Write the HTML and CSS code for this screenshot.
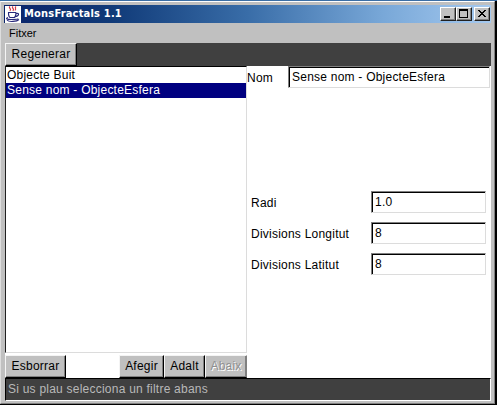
FILE: index.html
```html
<!DOCTYPE html>
<html lang="ca">
<head>
<meta charset="utf-8">
<title>MonsFractals 1.1</title>
<link rel="stylesheet" href="styles.css">
</head>
<body>
<div class="window">
  <header class="titlebar">
    <svg class="logo" width="16" height="17" viewBox="0 0 16 17" fill="none">
      <path fill="#fff" d="M0 0h16v17H0z"/>
      <path stroke="#d33c48" stroke-width="1.2" d="M5 .5C3 2.500 7 2 5 5M8 .5C6 2.500 10 2 8 5M11 .5C9 2.500 12 2 10 4.500"/>
      <path stroke="#29297b" stroke-width="1.2" d="M3 6.500h8M3.500 6.500C3.500 9 4 11 5 11.500h4.500C11 10.500 11 9 11 6.500M11 7.500c4-1 3 3-1 3M3 11.500c-3 1-1 2 3 2s7-.5 7-1M2 14c2 2.500 10 1.500 12-.5"/>
    </svg>
    <h1>MonsFractals 1.1</h1>
    <div class="controls">
      <button class="control" aria-label="Minimitza"><svg width="12" height="10" viewBox="0 0 12 10" shape-rendering="crispEdges"><path d="M2 7h6v2H2z"/></svg></button>
      <button class="control" aria-label="Maximitza"><svg width="12" height="10" viewBox="0 0 12 10" shape-rendering="crispEdges"><path d="M1 0h9v9H1zM2 2v6h7V2z" fill-rule="evenodd"/></svg></button>
      <button class="control close" aria-label="Tanca"><svg width="12" height="10" viewBox="0 0 12 10" shape-rendering="crispEdges"><path d="M2 1h2v1h1v1h2V2h1V1h2v1H9v1H8v1H7v1h1v1h1v1h1v1H8V7H7V6H5v1H4v1H2V7h1V6h1V5h1V4H4V3H3V2H2z"/></svg></button>
    </div>
  </header>
  <nav class="menubar"><span>Fitxer</span></nav>
  <div class="toolbar"><button class="button regenerate">Regenerar</button></div>
  <main class="content">
    <section class="objects">
      <ul class="list">
        <li>Objecte Buit</li>
        <li class="selected">Sense nom - ObjecteEsfera</li>
      </ul>
      <div class="actions">
        <button class="button delete">Esborrar</button>
        <button class="button add">Afegir</button>
        <button class="button up">Adalt</button>
        <button class="button down" disabled>Abaix</button>
      </div>
    </section>
    <section class="details">
      <div class="name-row"><span>Nom</span><div class="field">Sense nom - ObjecteEsfera</div></div>
      <div class="properties">
        <div class="property"><span>Radi</span><div class="field">1.0</div></div>
        <div class="property"><span>Divisions Longitut</span><div class="field">8</div></div>
        <div class="property"><span>Divisions Latitut</span><div class="field">8</div></div>
      </div>
    </section>
  </main>
  <footer class="status">Si us plau selecciona un filtre abans</footer>
</div>
</body>
</html>
```
FILE: styles.css
```css
* { box-sizing: border-box; }
body {
  margin: 0;
  height: 405px;
  overflow: hidden;
  background: #000;
  border-top: 1px solid #3a6ea5;
  font: 12px/15px "Liberation Sans", Arial, sans-serif;
  letter-spacing: .23px;
  color: #000;
}
.window {
  width: 495px;
  height: 403px;
  padding: 3px 2px 2px 3px;
  background: #c0c0c0;
  border: 1px solid #fff;
  border-left-color: #dedede;
  border-right-color: #808080;
  border-bottom-color: #808080;
  display: flex;
  flex-direction: column;
}
.titlebar {
  height: 18px;
  flex: none;
  margin-right: 1px;
  padding: 0 1px;
  display: flex;
  align-items: center;
  background: linear-gradient(90deg, #0a246a 0%, #103a78 22%, #396da8 50%, #79a8d8 78%, #a6caf0 100%);
}
.logo { flex: none; }
h1 {
  margin: 0 auto 0 3px;
  font: bold 11px/18px "DejaVu Sans Condensed", "DejaVu Sans", sans-serif;
  font-stretch: condensed;
  letter-spacing: .2px;
  color: #fff;
}
.controls { display: flex; }
.control {
  width: 16px;
  height: 14px;
  padding: 1px;
  border: 1px solid;
  border-color: #fff #202020 #202020 #fff;
  background: #c0c0c0;
  box-shadow: inset -1px -1px #808080;
  display: block;
}
.control svg { display: block; }
.close { margin-left: 2px; }
.menubar { height: 20px; flex: none; padding: 3px 5px; font-size: 11px; letter-spacing: 0; }
.toolbar { height: 23px; flex: none; margin: 0 1px; background: #404040; }
.button {
  padding: 0;
  border: 1px solid;
  border-color: #f4f4f4 #000 #000 #f4f4f4;
  box-shadow: inset -1px -1px #808080;
  background: #c0c0c0;
  color: #000;
  font: inherit;
  letter-spacing: inherit;
  display: block;
}
.regenerate { width: 72px; height: 23px; }
.content {
  height: 312px;
  flex: none;
  margin: 0 1px;
  background: #fff;
  display: flex;
}
.objects { width: 242px; }
.list {
  list-style: none;
  margin: 0;
  padding: 1px 0 0;
  height: 287px;
  border: 1px solid;
  border-color: #000 #dcdcdc #dcdcdc #202020;
}
.list li { height: 15px; line-height: 15px; padding-left: 1px; white-space: nowrap; }
.list .selected { background: #000080; color: #fff; }
.actions { display: flex; padding-top: 2px; }
.actions .button { height: 23px; }
.delete { width: 61px; margin-right: auto; }
.add { width: 45px; }
.up { width: 41px; }
.down { width: 42px; }
.button:disabled { color: #909090; text-shadow: 1px 1px #fff; border-right-color: #808080; }
.details { flex: 1; }
.name-row { display: flex; }
.name-row span { width: 41px; padding-top: 5px; }
.field {
  height: 22px;
  border: 1px solid;
  border-color: #808080 #dcdcdc #dcdcdc #808080;
  box-shadow: inset 1px 1px #000;
  padding: 3px 3px;
  white-space: nowrap;
}
.name-row .field { width: 202px; }
.properties {
  margin: 103px 5px 0 4px;
  display: grid;
  gap: 9px;
}
.property { display: flex; }
.property span { width: 120px; padding-top: 5px; }
.property .field { width: 115px; }
.status {
  height: 23px;
  flex: none;
  margin: 0 1px;
  padding: 3px 2px;
  background: #404040;
  border: 1px solid;
  border-color: #000 #fff #fff #000;
  color: #b8b8b8;
}
```
